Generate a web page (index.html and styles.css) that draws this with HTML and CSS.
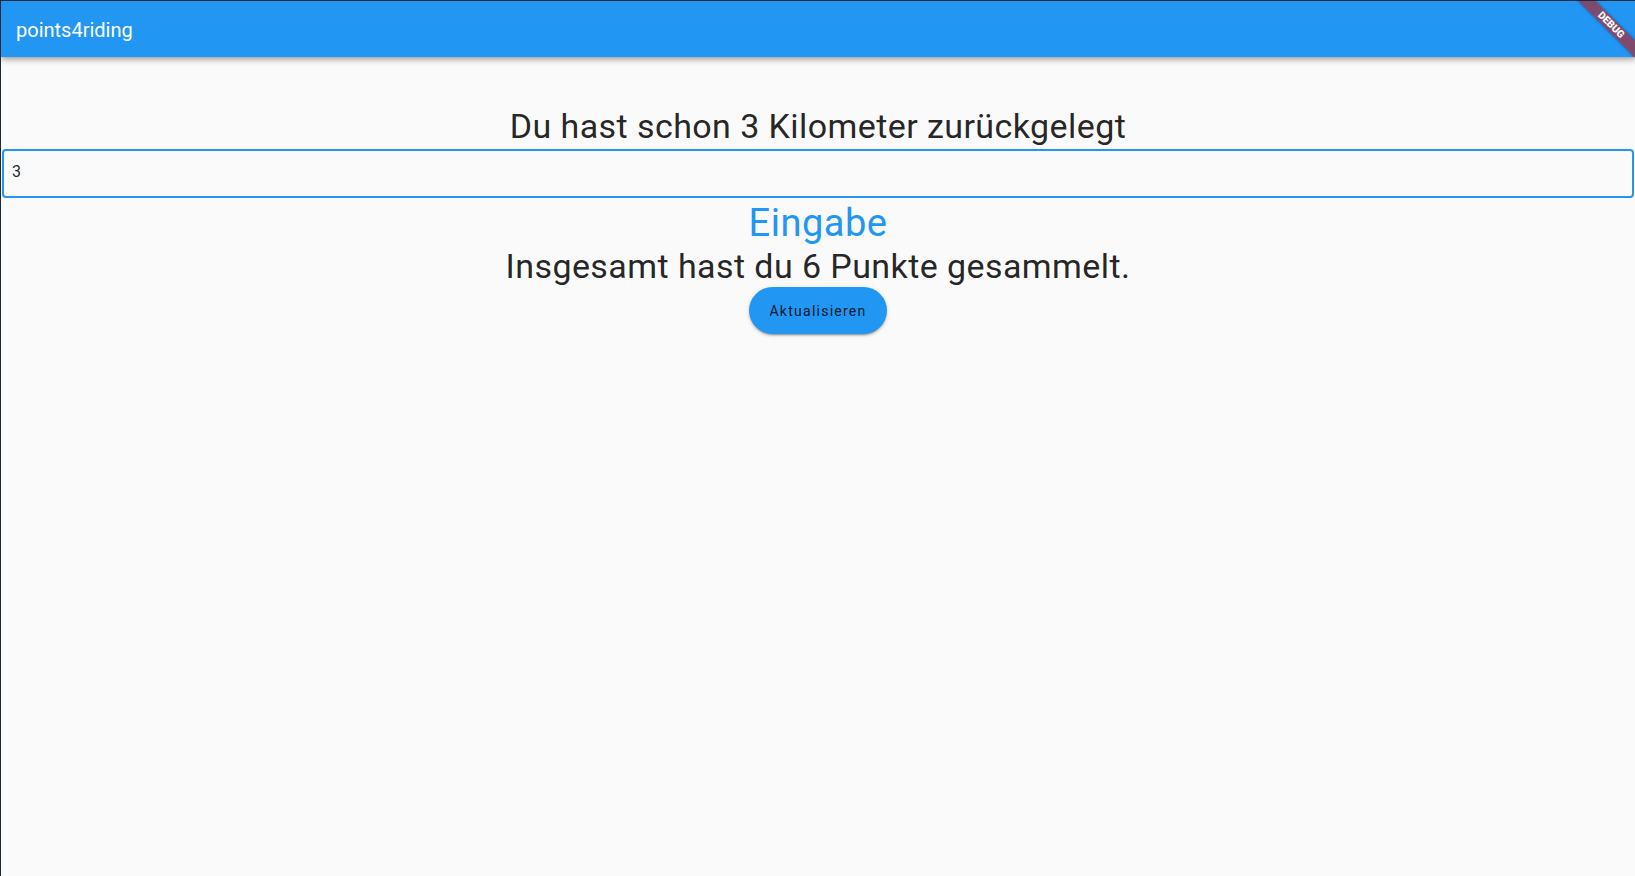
FILE: index.html
```html
<!DOCTYPE html>
<html lang="de">
<head>
<meta charset="utf-8">
<title>points4riding</title>
<link rel="stylesheet" href="styles.css">
</head>
<body>
<div class="app">
  <header class="appbar"><span class="title">points4riding</span></header>
  <main class="content">
    <h1 class="headline">Du hast schon 3 Kilometer zurückgelegt</h1>
    <input class="field" type="text" value="3">
    <div class="link">Eingabe</div>
    <p class="headline">Insgesamt hast du 6 Punkte gesammelt.</p>
    <button class="btn">Aktualisieren</button>
  </main>
  <div class="banner-anchor"><div class="banner">DEBUG</div></div>
</div>
</body>
</html>
```
FILE: styles.css
```css
html, body {
  height: 100%;
}
body {
  margin: 0;
  background: #fafafa;
  border-top: 1px solid #1b2836;
  border-left: 1px solid #1b2836;
  box-sizing: border-box;
  font-family: Roboto, "Liberation Sans", sans-serif;
  overflow: hidden;
}
.app {
  position: relative;
  height: 875px;
  overflow: hidden;
  background: #fafafa;
}
.appbar {
  position: relative;
  z-index: 1;
  box-sizing: border-box;
  height: 56px;
  padding: 2px 0 0 15px;
  background: #2196f3;
  display: flex;
  align-items: center;
  box-shadow: 0 2px 4px -1px rgba(0,0,0,.2), 0 4px 5px 0 rgba(0,0,0,.14), 0 1px 10px 0 rgba(0,0,0,.12);
}
.title {
  color: #fff;
  font-size: 20px;
  line-height: 24px;
  font-weight: 400;
}
.content {
  display: flex;
  flex-direction: column;
  align-items: center;
  padding-top: 49px;
}
.headline {
  margin: 0;
  font-size: 34px;
  line-height: 40px;
  font-weight: 400;
  letter-spacing: 0.42px;
  color: rgba(0,0,0,.87);
}
.field {
  align-self: stretch;
  margin: 3px 1px 0 1px;
  height: 49px;
  box-sizing: border-box;
  border: 2px solid #2196f3;
  border-radius: 4px;
  padding: 11px 12px 15px 8px;
  font-family: Roboto, "Liberation Sans", sans-serif;
  font-size: 16px;
  line-height: 19px;
  color: rgba(0,0,0,.87);
  background: transparent;
  outline: none;
}
.link {
  margin-top: 3px;
  font-size: 38px;
  line-height: 44px;
  color: #2196f3;
  letter-spacing: 0.5px;
}
.link + .headline {
  margin-top: 1px;
}
.btn {
  margin-top: 1px;
  height: 47px;
  padding: 0 20px;
  border: 0;
  border-radius: 24px;
  background: #2196f3;
  color: rgba(0,0,0,.87);
  font-family: Roboto, "Liberation Sans", sans-serif;
  font-size: 14px;
  font-weight: 400;
  letter-spacing: 1.25px;
  box-shadow: 0 3px 1px -2px rgba(0,0,0,.2), 0 2px 2px 0 rgba(0,0,0,.14), 0 1px 5px 0 rgba(0,0,0,.12);
}
.banner-anchor {
  position: absolute;
  top: 0;
  right: 0;
  width: 0;
  height: 0;
  z-index: 5;
  transform: rotate(45deg);
  transform-origin: 0 0;
}
.banner {
  position: absolute;
  left: -40px;
  top: 28px;
  width: 80px;
  height: 12px;
  background: rgba(183,28,28,.627);
  box-shadow: 0 0 3px rgba(0,0,0,.4);
  color: #fff;
  font-family: Roboto, "Liberation Sans", sans-serif;
  font-size: 10.2px;
  font-weight: 900;
  line-height: 12px;
  text-align: center;
}
```
